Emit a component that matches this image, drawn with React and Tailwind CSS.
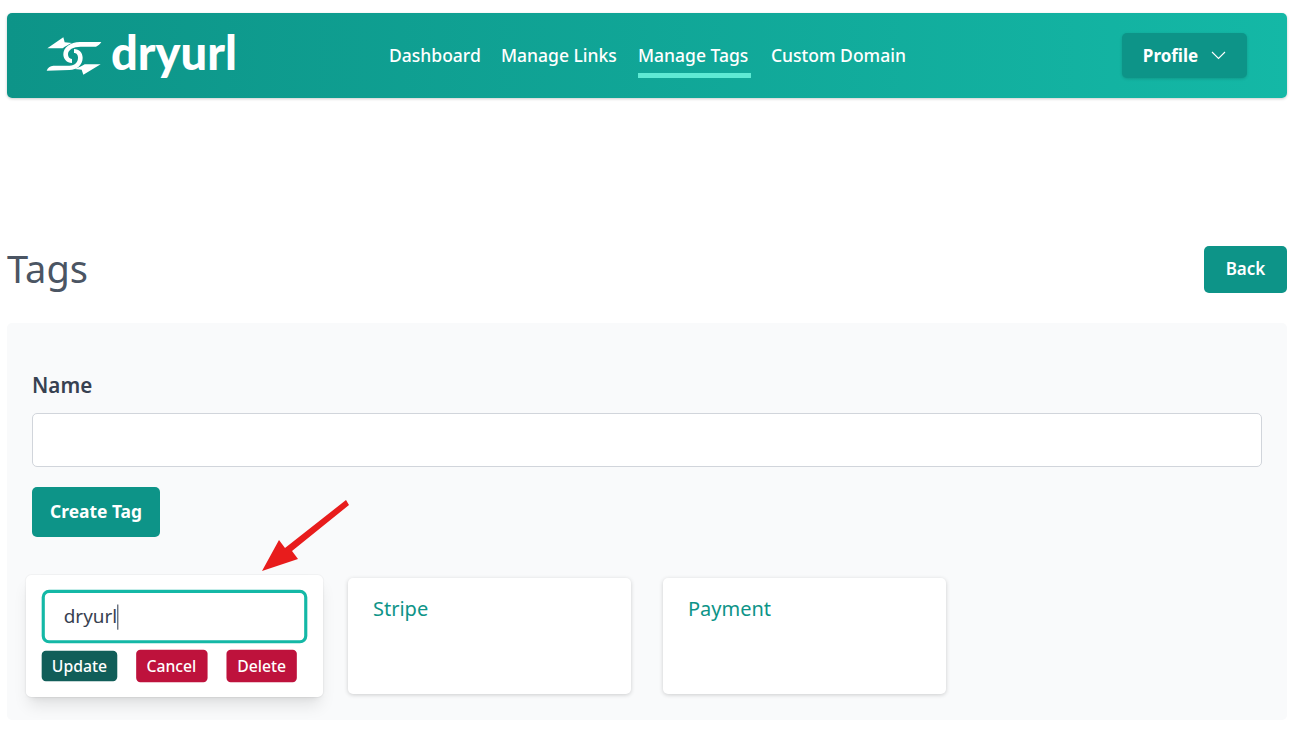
export default function App() {
  return (
    <div className="w-[1296px] h-[736px] overflow-hidden bg-white pl-[7px] pr-[9px] pt-[13px] font-['Noto_Sans',sans-serif] relative">
      <header className="h-[85px] rounded-[5px] bg-gradient-to-r from-[#0d9488] to-[#14b8a6] shadow-[0_1px_3px_rgba(0,0,0,0.2)] flex items-center pl-[40px] pr-[40px]">
        <div className="flex items-center w-[345px] -ml-[3px] gap-[5px]">
          <svg width="62" height="46" viewBox="0 0 186 138" fill="#fff">
            <path d="M10 46 L58 13 L62 28 L84 30 C74 34 64 40 56 46 Z" />
            <path d="M170 94 L118 125 L113 110 L92 108 C104 104 114 99 122 94 Z" />
            <path d="M172 27 L108 27 C78 27 58 44 58 64 C58 78 68 90 84 90 L84 78 C76 78 72 72 72 64 C72 50 88 41 110 41 L156 41 C163 38 168 33 172 27 Z" />
            <path d="M8 113 C11 104 18 99 28 98 L76 98 C94 98 102 86 102 74 C102 64 96 60 90 60 L90 48 C106 48 116 60 116 74 C116 94 100 111 76 111 Z" />
          </svg>
          <span className="text-[47px] leading-none font-black text-white font-['Lato',sans-serif] -mt-[6px]">dryurl</span>
        </div>
        <nav className="flex items-center gap-[20px] text-[17.5px] font-medium text-white whitespace-nowrap">
          <a className="block w-[92px]">Dashboard</a>
          <a className="block w-[117px]">Manage Links</a>
          <a className="block w-[113px] relative">Manage Tags<span className="absolute left-0 right-0 top-[31px] h-[5px] bg-[#5eead4]" /></a>
          <a className="block w-[134px]">Custom Domain</a>
        </nav>
        <button className="ml-auto w-[125px] h-[45px] rounded-[5px] bg-[#0d9488] shadow-[0_1px_3px_rgba(0,0,0,0.15)] flex items-center justify-center gap-[13px] text-[17px] font-bold text-white">
          Profile
          <svg width="15" height="9" viewBox="0 0 15 9" fill="none" stroke="#fff" strokeWidth="1.1"><path d="M1 1l6.5 6.5L14 1" /></svg>
        </button>
      </header>

      <div className="flex items-center justify-between mt-[148px] h-[47px]">
        <h1 className="text-[38px] leading-none font-normal text-[#4b5563] -mt-[3px]">Tags</h1>
        <button className="w-[83px] h-[47px] rounded-[5px] bg-[#0d9488] pb-[1px] text-[17px] font-semibold text-white">Back</button>
      </div>

      <main className="mt-[30px] h-[397px] rounded-[5px] bg-[#f9fafb] px-[25px] pt-[48px]">
        <label className="block text-[20.6px] leading-[28px] font-semibold text-[#374151]">Name</label>
        <input className="block w-full h-[54px] mt-[14px] rounded-[5px] border border-[#d1d5db] bg-white" />
        <button className="block mt-[20px] w-[128px] h-[50px] rounded-[5px] bg-[#0d9488] pb-[2px] text-[17.4px] font-bold text-white">Create Tag</button>

        <div className="flex gap-[32px] mt-[41px] ml-[1px]">
          <div className="w-[283px] h-[116px] rounded-[5px] bg-white shadow-[0_10px_15px_-3px_rgba(0,0,0,0.1),0_4px_6px_-4px_rgba(0,0,0,0.1),0_0_0_1px_rgba(0,0,0,0.03)] scale-105 px-[15px] pt-[14px]">
            <div className="h-[51px] rounded-[7px] border-[3px] border-[#14b8a6] flex items-center pl-[18px] text-[18px] text-[#374151] bg-white">
              dryurl<span className="w-px h-[24px] bg-[#374151]" />
            </div>
            <div className="flex items-center mt-[6px] text-[15px] font-medium text-white">
              <button className="w-[72px] h-[29px] rounded-[4px] bg-[#115e59] pb-[1px]">Update</button>
              <button className="w-[68px] h-[31px] ml-[17.5px] rounded-[4px] bg-[#be123c] pb-[1px]">Cancel</button>
              <button className="w-[67px] h-[31px] ml-[18.5px] rounded-[4px] bg-[#be123c] pb-[1px]">Delete</button>
            </div>
          </div>
          <div className="w-[283px] h-[116px] rounded-[5px] bg-white shadow-[0_1px_4px_rgba(0,0,0,0.18)] px-[25px] pt-[17px] text-[20px] leading-[28px] text-[#0d9488]">Stripe</div>
          <div className="w-[283px] h-[116px] rounded-[5px] bg-white shadow-[0_1px_4px_rgba(0,0,0,0.18)] px-[25px] pt-[17px] text-[20px] leading-[28px] text-[#0d9488]">Payment</div>
        </div>
      </main>

      <svg className="absolute left-[255px] top-[495px]" width="100" height="80" viewBox="0 0 100 80" fill="#e81c1c">
        <path d="M91 5 L94 10 L37 56 L43 64 L7 76 L24 45 L30 53Z" />
      </svg>
    </div>
  );
}
